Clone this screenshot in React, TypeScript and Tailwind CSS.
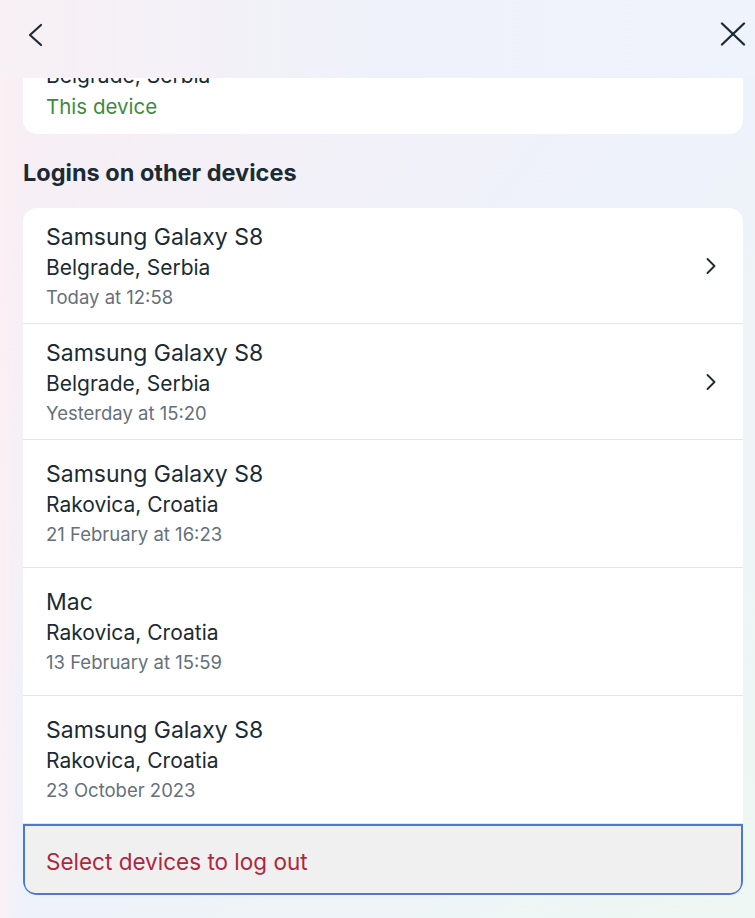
import { ChevronRight } from 'lucide-react'

interface Login { id: number; device: string; place: string; when: string; more?: boolean }

const LOGINS: Login[] = [
  { id: 1, device: 'Samsung Galaxy S8', place: 'Belgrade, Serbia', when: 'Today at 12:58', more: true },
  { id: 2, device: 'Samsung Galaxy S8', place: 'Belgrade, Serbia', when: 'Yesterday at 15:20', more: true },
  { id: 3, device: 'Samsung Galaxy S8', place: 'Rakovica, Croatia', when: '21 February at 16:23' },
  { id: 4, device: 'Mac', place: 'Rakovica, Croatia', when: '13 February at 15:59' },
  { id: 5, device: 'Samsung Galaxy S8', place: 'Rakovica, Croatia', when: '23 October 2023' },
]

function Row({ l }: { l: Login }) {
  return (
    <div className={`flex items-center justify-between pl-[23px] pr-[18px] border-b border-[#e3e5e8] ${l.more ? 'pt-[14px] pb-[13px]' : 'pt-[19px] pb-[20px]'}`}>
      <div>
        <div className="text-[23px] leading-[30px] text-[#1c2b33]">{l.device}</div>
        <div className="text-[21px] leading-[32px] text-[#1c2b33]">{l.place}</div>
        <div className="text-[18.5px] leading-[26px] text-[#65707a]">{l.when}</div>
      </div>
      {l.more && <ChevronRight size={28} strokeWidth={1.6} className="text-[#1c2b33]" />}
    </div>
  )
}

export default function App() {
  return (
    <div className="relative h-[918px] w-[755px] overflow-hidden bg-gradient-to-br from-[#f9eef3] via-[#eef2fb] to-[#eef7f3]" style={{ fontFamily: 'Inter, "Noto Sans", sans-serif' }}>
      <div className="absolute inset-y-0 left-0 w-[22px] bg-gradient-to-r from-[#fbf0f3] to-transparent" />

      {/* header sits over the scrolled content */}
      <header className="absolute top-0 inset-x-0 z-10 h-[78px] flex items-start justify-between pl-[27px] pr-[9px] pt-[22px] bg-gradient-to-r from-[#f8f0f5] via-[#eff2fa] to-[#eff3fb]">
        <svg width="16" height="24" viewBox="0 0 16 24" fill="none" stroke="#1c2b33" strokeWidth="2.2" strokeLinecap="round" strokeLinejoin="round" className="mt-[1px]">
          <polyline points="14,2 3,12 14,22" />
        </svg>
        <svg width="26" height="24" viewBox="0 0 26 24" fill="none" stroke="#1c2b33" strokeWidth="2.3" strokeLinecap="round">
          <line x1="2" y1="1.5" x2="24" y2="22.5" />
          <line x1="24" y1="1.5" x2="2" y2="22.5" />
        </svg>
      </header>

      <main className="relative pl-[23px] pr-[12px] pt-[16px]">
        <div className="bg-white rounded-[14px] flex items-center justify-between pl-[23px] pr-[18px] pt-[14px] pb-[12px]">
          <div>
            <div className="text-[23px] leading-[30px] text-[#1c2b33]">iPhone</div>
            <div className="text-[21px] leading-[32px] text-[#1c2b33]">Belgrade, Serbia</div>
            <div className="text-[20.5px] leading-[30px] text-[#3e8a3f]">This device</div>
          </div>
          <ChevronRight size={28} strokeWidth={1.6} className="text-[#1c2b33] -mt-[14px]" />
        </div>

        <h2 className="mt-[24px] mb-[20px] text-[23.5px] leading-[30px] font-bold text-[#1c2b33]">Logins on other devices</h2>

        <div className="bg-white rounded-[14px] overflow-hidden">
          {LOGINS.map(l => <Row key={l.id} l={l} />)}
          <button className="w-full h-[71px] text-left pl-[21px] pt-[4px] bg-[#f0f0f1] border-2 border-[#4a79d2] rounded-b-[12px] text-[22.5px] text-[#b0263b]">
            Select devices to log out
          </button>
        </div>
      </main>
    </div>
  )
}
